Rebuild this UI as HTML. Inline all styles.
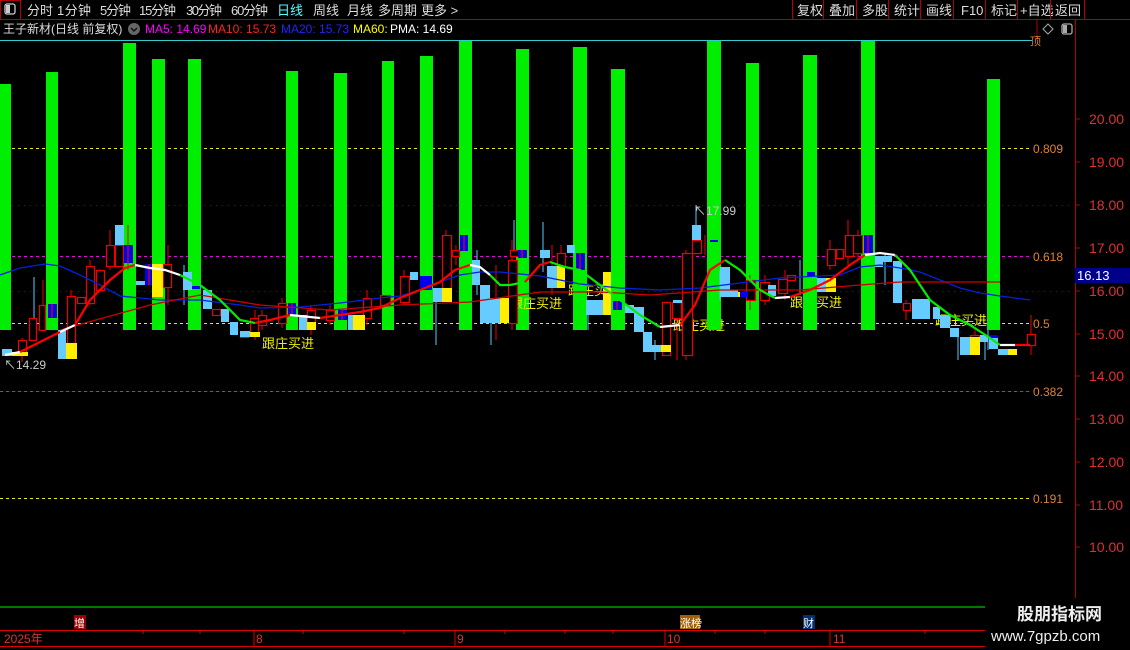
<!DOCTYPE html>
<html><head><meta charset="utf-8"><style>
body{margin:0;background:#000;width:1130px;height:650px;overflow:hidden;font-family:"Liberation Sans","Noto Sans CJK SC",sans-serif}
svg{position:absolute;left:0;top:0}
</style></head><body>
<svg width="1130" height="650" xmlns="http://www.w3.org/2000/svg" font-family="Liberation Sans, Noto Sans CJK SC, sans-serif">
<rect width="1130" height="650" fill="#000"/>
<!-- top bar -->
<line x1="0" y1="19.5" x2="1130" y2="19.5" stroke="#b00000"/>
<rect x="0.5" y="0.5" width="20" height="19" fill="none" stroke="#b00000"/>
<rect x="5" y="4" width="10" height="10" rx="2" fill="none" stroke="#ccc" stroke-width="1.3"/><rect x="6" y="5" width="4" height="8" fill="#ccc"/>
<g font-size="13" fill="#ddd">
<text x="27" y="15">分时</text><text x="57" y="15" textLength="34">1分钟</text><text x="100" y="15" textLength="31">5分钟</text><text x="139" y="15" textLength="37">15分钟</text><text x="186" y="15" textLength="36">30分钟</text><text x="231" y="15" textLength="37">60分钟</text>
<text x="277" y="15" fill="#5ff">日线</text><text x="313" y="15">周线</text><text x="347" y="15">月线</text><text x="378" y="15">多周期</text><text x="421" y="15">更多 &gt;</text>
<text x="797" y="15">复权</text><text x="829" y="15">叠加</text><text x="862" y="15">多股</text><text x="894" y="15">统计</text><text x="926" y="15">画线</text><text x="961" y="15">F10</text><text x="991" y="15">标记</text><text x="1020" y="15">+自选</text><text x="1055" y="15">返回</text>
</g>
<g stroke="#b00000"><line x1="792.5" y1="0" x2="792.5" y2="19"/><line x1="823.5" y1="0" x2="823.5" y2="19"/><line x1="856.5" y1="0" x2="856.5" y2="19"/><line x1="888.5" y1="0" x2="888.5" y2="19"/><line x1="920.5" y1="0" x2="920.5" y2="19"/><line x1="953.5" y1="0" x2="953.5" y2="19"/><line x1="985.5" y1="0" x2="985.5" y2="19"/><line x1="1017.5" y1="0" x2="1017.5" y2="19"/><line x1="1050.5" y1="0" x2="1050.5" y2="19"/><line x1="1084.5" y1="0" x2="1084.5" y2="19"/></g>
<g font-size="12">
<text x="3" y="33" fill="#ddd">王子新材(日线 前复权)</text>
<circle cx="134" cy="29" r="6" fill="#666"/><path d="M131 28l3 3 3-3" stroke="#111" fill="none" stroke-width="1.5"/>
<text x="145" y="33" fill="#f0f">MA5: 14.69</text><text x="208" y="33" fill="#f22">MA10: 15.73</text><text x="281" y="33" fill="#22f">MA20: 15.73</text><text x="353" y="33" fill="#ff0">MA60:</text><text x="390" y="33" fill="#fff">PMA: 14.69</text>
</g>
<path d="M1048 24l5 5-5 5-5-5z" fill="none" stroke="#aaa"/>
<rect x="1062" y="24" width="10" height="10" rx="2" fill="none" stroke="#aaa" stroke-width="1.3"/><rect x="1063" y="25" width="4" height="8" fill="#aaa"/>
<line x1="1037" y1="20" x2="1037" y2="40" stroke="#b00000"/>
<!-- axis -->
<line x1="1075.5" y1="20" x2="1075.5" y2="605" stroke="#b00000"/>
<g font-size="14" fill="#e03030">
<text x="1089" y="124">20.00</text><text x="1089" y="167">19.00</text><text x="1089" y="210">18.00</text><text x="1089" y="253">17.00</text><text x="1089" y="296">16.00</text><text x="1089" y="339">15.00</text><text x="1089" y="381">14.00</text><text x="1089" y="424">13.00</text><text x="1089" y="467">12.00</text><text x="1089" y="510">11.00</text><text x="1089" y="552">10.00</text>
</g>
<g stroke="#b00000"><line x1="1075" y1="119" x2="1080" y2="119"/><line x1="1075" y1="162" x2="1080" y2="162"/><line x1="1075" y1="205" x2="1080" y2="205"/><line x1="1075" y1="248" x2="1080" y2="248"/><line x1="1075" y1="291" x2="1080" y2="291"/><line x1="1075" y1="334" x2="1080" y2="334"/><line x1="1075" y1="376" x2="1080" y2="376"/><line x1="1075" y1="419" x2="1080" y2="419"/><line x1="1075" y1="462" x2="1080" y2="462"/><line x1="1075" y1="505" x2="1080" y2="505"/><line x1="1075" y1="547" x2="1080" y2="547"/></g>
<rect x="1075" y="268" width="55" height="15" fill="#00008b"/><text x="1077" y="280" font-size="13" fill="#fff">16.13</text>
<!-- horizontal lines -->
<line x1="0" y1="40.5" x2="1032" y2="40.5" stroke="#3cc"/>
<text x="1030" y="45" font-size="11" fill="#e08030">顶</text>
<g stroke-dasharray="3,3" stroke-width="1">
<line x1="0" y1="148.5" x2="1030" y2="148.5" stroke="#ee0"/>
<line x1="0" y1="256.5" x2="1030" y2="256.5" stroke="#e0e"/>
<line x1="0" y1="323.5" x2="1030" y2="323.5" stroke="#ee0"/>
<line x1="0" y1="391.5" x2="1030" y2="391.5" stroke="#e0e"/>
<line x1="0" y1="498.5" x2="1030" y2="498.5" stroke="#ee0"/>
</g>
<g stroke="#700" stroke-dasharray="1,5"><line x1="0" y1="205.5" x2="1070" y2="205.5"/><line x1="0" y1="291.5" x2="1070" y2="291.5"/></g>
<g font-size="12" fill="#e08030"><text x="1033" y="153">0.809</text><text x="1033" y="261">0.618</text><text x="1033" y="328">0.5</text><text x="1033" y="396">0.382</text><text x="1033" y="503">0.191</text></g>
<!-- labels -->
<g font-size="13" fill="#ee0">
<text x="262" y="348">跟庄买进</text><text x="568" y="295">跟庄买进</text><text x="673" y="330">跟庄买进</text><text x="790" y="307">跟庄买进</text><text x="935" y="325">跟庄买进</text>
</g>
<!-- green bars -->
<g fill="#00ee00">
<rect x="0" y="84" width="11" height="246"/><rect x="46" y="72" width="12" height="258"/><rect x="123" y="43" width="13" height="287"/><rect x="152" y="59" width="13" height="271"/><rect x="188" y="59" width="13" height="271"/><rect x="286" y="71" width="12" height="259"/><rect x="334" y="73" width="13" height="257"/><rect x="382" y="61" width="12" height="269"/><rect x="420" y="56" width="13" height="274"/><rect x="459" y="41" width="13" height="289"/><rect x="516" y="49" width="13" height="281"/><rect x="573" y="47" width="14" height="283"/><rect x="611" y="69" width="14" height="261"/><rect x="707" y="41" width="14" height="289"/><rect x="746" y="63" width="13" height="267"/><rect x="803" y="55" width="14" height="275"/><rect x="861" y="41" width="14" height="289"/><rect x="987" y="79" width="13" height="251"/>
</g>
<text x="510" y="308" font-size="13" fill="#ee0">跟庄买进</text>
<!-- wicks -->
<g stroke="#e00" stroke-width="1">
<path d="M22 338v24M34 300v40M43 280v30M71 290v60M90 260v45M110 230v40M128 225v45M168 245v60M255 310v30M262 310v20M282 298v30M311 305v30M330 305v20M367 290v35M404 270v35M446 230v65M456 245v20M496 265v75M512 240v90M552 245v50M561 245v25M677 300v60M686 250v110M705 235v20M750 275v35M765 275v30M785 270v30M830 240v30M848 220v45M858 230v30M906 300v20M975 330v15M1031 315v40"/>
</g>
<g stroke="#5cf" stroke-width="1"><path d="M34 277v60M184 265v40M436 290v55M477 250v45M491 300v45M514 220v30M543 222v50M588 300v30M655 340v20M696 205v45M720 270v30M800 260v35M885 255v30M958 330v30M988 330v20M985 340v20"/></g>
<!-- candles -->
<g stroke="#e00" fill="#000" stroke-width="1.2">
<rect x="18.5" y="340.5" width="8" height="15"/><rect x="29.5" y="318.5" width="7" height="22"/><rect x="39.5" y="305.5" width="6" height="25"/><rect x="67.5" y="296.5" width="8" height="47"/><rect x="77.5" y="297.5" width="8" height="6"/><rect x="86.5" y="266.5" width="8" height="37"/><rect x="96.5" y="270.5" width="8" height="20"/><rect x="106.5" y="245.5" width="8" height="21"/><rect x="115.5" y="245.5" width="8" height="21"/><rect x="163.5" y="264.5" width="8" height="23"/><rect x="212.5" y="309.5" width="8" height="6"/><rect x="240.5" y="332.5" width="8" height="5"/><rect x="250.5" y="318.5" width="8" height="15"/><rect x="258.5" y="315.5" width="8" height="10"/><rect x="278.5" y="303.5" width="8" height="20"/><rect x="307.5" y="310.5" width="8" height="18"/><rect x="326.5" y="310.5" width="8" height="10"/><rect x="363.5" y="298.5" width="8" height="20"/><rect x="380.5" y="295.5" width="10" height="10"/><rect x="400.5" y="276.5" width="9" height="26"/><rect x="442.5" y="235.5" width="9" height="53"/><rect x="452.5" y="250.5" width="7" height="6"/><rect x="508.5" y="260.5" width="9" height="63"/><rect x="510.5" y="250.5" width="8" height="6"/><rect x="557.5" y="253.5" width="8" height="13"/><rect x="662.5" y="302.5" width="8" height="53"/><rect x="672.5" y="302.5" width="9" height="16"/><rect x="682.5" y="253.5" width="10" height="102"/><rect x="692.5" y="240.5" width="9" height="13"/><rect x="746.5" y="280.5" width="9" height="20"/><rect x="760.5" y="282.5" width="9" height="18"/><rect x="778.5" y="279.5" width="9" height="14"/><rect x="787.5" y="275.5" width="8" height="5"/><rect x="827.5" y="249.5" width="8" height="16"/><rect x="836.5" y="249.5" width="7" height="9"/><rect x="845.5" y="235.5" width="8" height="21"/><rect x="853.5" y="235.5" width="9" height="18"/><rect x="903.5" y="303.5" width="7" height="7"/><rect x="970.5" y="335.5" width="9" height="3"/><rect x="1027.5" y="334.5" width="8" height="11"/>
</g>
<g fill="#66ccff">
<rect x="58" y="330" width="8" height="13"/><rect x="58" y="343" width="8" height="16"/><rect x="115" y="225" width="9" height="20"/><rect x="136" y="281" width="9" height="4"/><rect x="183" y="272" width="9" height="18"/><rect x="203" y="290" width="9" height="19"/><rect x="221" y="309" width="8" height="13"/><rect x="230" y="322" width="8" height="13"/><rect x="240" y="331" width="10" height="6"/><rect x="299" y="315" width="8" height="15"/><rect x="348" y="315" width="5" height="15"/><rect x="410" y="272" width="8" height="8"/><rect x="433" y="288" width="9" height="14"/><rect x="472" y="260" width="8" height="25"/><rect x="480" y="285" width="10" height="38"/><rect x="490" y="298" width="10" height="25"/><rect x="540" y="250" width="10" height="8"/><rect x="547" y="266" width="10" height="22"/><rect x="567" y="245" width="8" height="8"/><rect x="586" y="300" width="17" height="15"/><rect x="625" y="305" width="9" height="8"/><rect x="634" y="307" width="10" height="25"/><rect x="643" y="332" width="9" height="20"/><rect x="652" y="345" width="10" height="7"/><rect x="673" y="300" width="9" height="3"/><rect x="692" y="225" width="9" height="15"/><rect x="720" y="267" width="10" height="30"/><rect x="730" y="290" width="8" height="7"/><rect x="768" y="285" width="8" height="11"/><rect x="817" y="278" width="9" height="14"/><rect x="875" y="256" width="8" height="11"/><rect x="883" y="256" width="9" height="6"/><rect x="893" y="261" width="9" height="42"/><rect x="912" y="299" width="18" height="20"/><rect x="933" y="307" width="7" height="12"/><rect x="940" y="315" width="10" height="13"/><rect x="950" y="328" width="9" height="9"/><rect x="960" y="337" width="10" height="18"/><rect x="980" y="335" width="8" height="7"/><rect x="989" y="338" width="9" height="11"/><rect x="998" y="349" width="10" height="6"/><rect x="2" y="349" width="10" height="7"/>
</g>
<g fill="#ffee00">
<rect x="66" y="343" width="11" height="16"/><rect x="145" y="281" width="7" height="4"/><rect x="152" y="264" width="11" height="33"/><rect x="250" y="332" width="10" height="5"/><rect x="307" y="322" width="9" height="8"/><rect x="353" y="315" width="12" height="15"/><rect x="442" y="288" width="10" height="14"/><rect x="500" y="298" width="9" height="25"/><rect x="557" y="266" width="8" height="22"/><rect x="603" y="272" width="8" height="43"/><rect x="661" y="345" width="10" height="7"/><rect x="826" y="278" width="10" height="14"/><rect x="970" y="337" width="10" height="18"/><rect x="1008" y="349" width="9" height="6"/><rect x="12" y="352" width="16" height="4"/><rect x="738" y="292" width="6" height="5"/>
</g>
<g fill="#0000ee">
<rect x="48" y="304" width="9" height="14"/><rect x="124" y="245" width="9" height="18"/><rect x="145" y="264" width="7" height="21"/><rect x="192" y="286" width="8" height="3"/><rect x="288" y="303" width="8" height="13"/><rect x="338" y="310" width="9" height="10"/><rect x="420" y="276" width="12" height="14"/><rect x="460" y="235" width="8" height="16"/><rect x="518" y="250" width="9" height="8"/><rect x="576" y="253" width="9" height="17"/><rect x="613" y="301" width="9" height="9"/><rect x="710" y="240" width="8" height="2"/><rect x="740" y="292" width="8" height="5"/><rect x="807" y="272" width="8" height="4"/><rect x="864" y="235" width="9" height="18"/><rect x="989" y="335" width="9" height="3"/>
</g>
<g stroke="#e00" stroke-width="1.2"><path d="M52 304v14M128 245v18M149 264v21M292 303v13M342 310v10M464 235v16M522 250v8M580 253v17M617 301v9M868 235v18"/></g>
<!-- MA lines -->
<polyline fill="none" stroke="#0022dd" stroke-width="1.3" points="0,275 20,268 45,264 60,266 80,275 100,285 120,296 140,298 160,300 200,300 240,305 260,308 300,307 340,303 380,298 400,296 420,290 440,282 460,275 480,272 500,272 540,276 580,284 620,288 660,290 700,288 740,283 780,278 820,276 840,275 860,267 880,265 900,268 920,272 940,280 960,288 980,293 1000,296 1030,300"/>
<polyline fill="none" stroke="#cc0000" stroke-width="1.3" points="60,330 150,305 200,295 260,305 330,310 400,305 470,302 540,292 600,292 650,295 720,290 800,290 860,285 900,282 950,282 1000,282"/>
<g fill="none" stroke-width="2.2">
<polyline stroke="#fff" points="5,355 20,352"/>
<polyline stroke="#f00" points="20,352 40,342 60,332"/>
<polyline stroke="#fff" points="60,332 75,325"/>
<polyline stroke="#f00" points="75,325 90,300 110,280 125,268 135,265"/>
<polyline stroke="#fff" points="135,265 150,268 165,270 180,275"/>
<polyline stroke="#00ee00" points="180,275 200,285 220,300 240,320 255,323"/>
<polyline stroke="#f00" points="255,323 270,320 290,315"/>
<polyline stroke="#fff" points="290,315 300,316 320,318"/>
<polyline stroke="#f00" points="320,318 340,315 360,312 380,308 400,298 420,290 440,282 455,270 470,265"/>
<polyline stroke="#fff" points="470,265 480,267 490,275"/>
<polyline stroke="#00ee00" points="490,275 500,285 510,285 525,282"/>
<polyline stroke="#f00" points="525,282 540,265 550,262"/>
<polyline stroke="#00ee00" points="550,262 565,267 580,270 600,285 620,300 640,315 660,327"/>
<polyline stroke="#fff" points="660,327 680,325"/>
<polyline stroke="#f00" points="680,325 695,305 710,270 725,260"/>
<polyline stroke="#00ee00" points="725,260 740,270 760,290 775,298"/>
<polyline stroke="#fff" points="775,298 790,297"/>
<polyline stroke="#f00" points="790,297 810,290 830,280 850,265 865,255"/>
<polyline stroke="#fff" points="865,255 880,253 895,255"/>
<polyline stroke="#00ee00" points="895,255 910,270 930,300 950,315 970,325 990,338 1000,345"/>
<polyline stroke="#fff" points="1000,345 1015,345"/>
<polyline stroke="#f00" points="1015,345 1030,345"/>
</g>
<g font-size="12" fill="#ccc"><text x="4" y="369">↖14.29</text><text x="694" y="215">↖17.99</text></g>
<!-- bottom -->
<line x1="0" y1="607" x2="985" y2="607" stroke="#00ee00"/>
<line x1="1031" y1="600" x2="1040" y2="600" stroke="#e08030"/>
<rect x="74" y="615" width="12" height="14" fill="#900"/><text x="74" y="627" font-size="11" fill="#fff">增</text>
<rect x="680" y="615" width="20" height="14" fill="#a06000"/><text x="680" y="627" font-size="11" fill="#fff">涨榜</text>
<rect x="803" y="615" width="12" height="14" fill="#003070"/><text x="803" y="627" font-size="11" fill="#fff">财</text>
<line x1="0" y1="630.5" x2="985" y2="630.5" stroke="#d00"/>
<line x1="0" y1="646.5" x2="985" y2="646.5" stroke="#d00"/>
<g stroke="#d00"><path d="M254 630v16M455 630v16M665 630v16M830 630v16M143 630v4M200 630v4M303 630v4M404 630v4M505 630v4M565 630v4M613 630v4M715 630v4M765 630v4M925 630v4"/></g>
<g font-size="12" fill="#e03030"><text x="4" y="643">2025年</text><text x="256" y="643">8</text><text x="457" y="643">9</text><text x="667" y="643">10</text><text x="833" y="643">11</text></g>
<rect x="985" y="598" width="145" height="52" fill="#000"/>
<text x="1017" y="620" font-size="17" font-weight="bold" fill="#eee">股朋指标网</text>
<text x="991" y="641" font-size="15" fill="#eee">www.7gpzb.com</text>
</svg>
</body></html>
